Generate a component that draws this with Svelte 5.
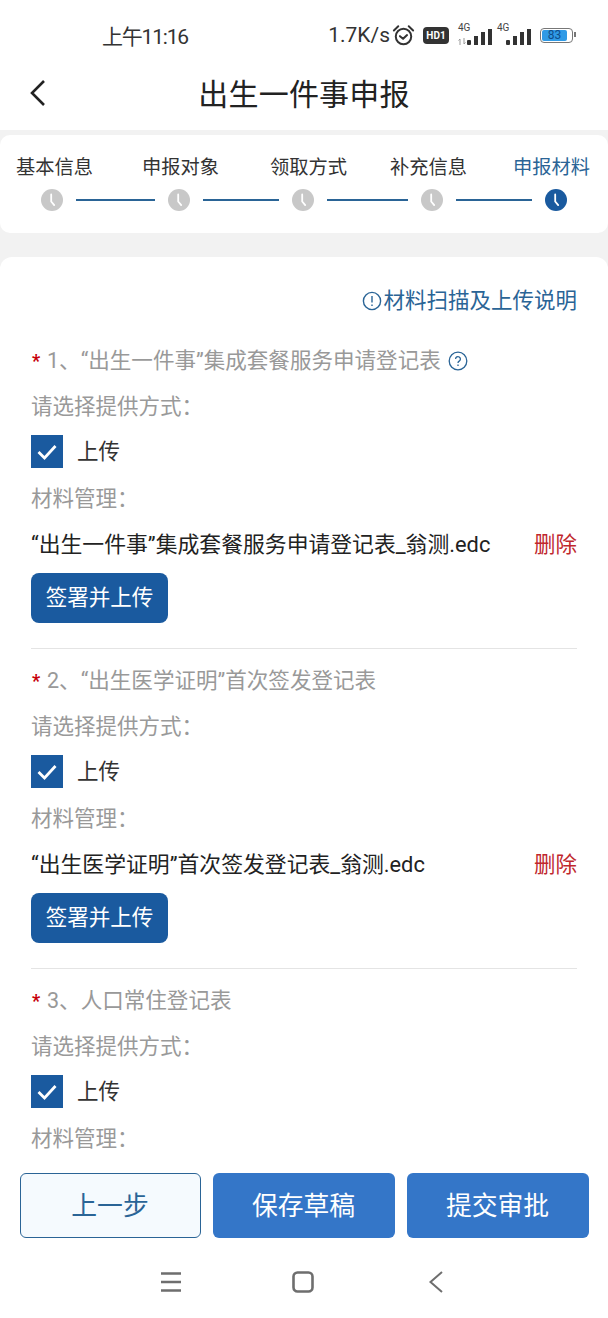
<script>
  const steps = [
    { label: '基本信息', gap: 0, line: 79 },
    { label: '申报对象', gap: 49, line: 76 },
    { label: '领取方式', gap: 51, line: 81 },
    { label: '补充信息', gap: 43, line: 76 },
    { label: '申报材料', gap: 46, active: true }
  ];

  const materials = [
    { no: 1, title: '“出生一件事”集成套餐服务申请登记表', help: true, file: '“出生一件事”集成套餐服务申请登记表_翁测.edc' },
    { no: 2, title: '“出生医学证明”首次签发登记表', file: '“出生医学证明”首次签发登记表_翁测.edc' },
    { no: 3, title: '人口常住登记表' }
  ];
</script>

{#snippet bars()}
  <svg width="26" height="16" viewBox="0 0 26 16" fill="#333" aria-hidden="true">
    <rect x="0" y="11" width="4" height="5" rx="1" /><rect x="7" y="7" width="4" height="9" /><rect x="14" y="3" width="4" height="13" /><rect x="21" y="0" width="4" height="16" />
  </svg>
{/snippet}

<div class="page">
  <div class="top">
    <div class="status">
      <span class="time">上午11:16</span>
      <div class="status-right">
        <span class="speed">1.7K/s</span>
        <svg class="alarm" width="23" height="23" viewBox="0 0 22 22" fill="none" stroke="#333" stroke-width="1.900" aria-hidden="true">
          <circle cx="11" cy="12" r="7.400" />
          <path d="M7.600 11.600l3 2.600 3.800-3.600" stroke-linecap="round" stroke-linejoin="round" />
          <path d="M1.800 6.200L6 2.200M20.200 6.200L16 2.200" stroke-linecap="round" />
        </svg>
        <span class="hd">HD1</span>
        <span class="net">
          <span class="net-label">4G</span>
          <svg class="arrows" width="8" height="7" viewBox="0 0 8 7" fill="none" stroke="#999" stroke-width="1" aria-hidden="true">
            <path d="M2 7V1M0.500 2.500L2 1M6 0v6M7.500 4.500L6 6" />
          </svg>
          {@render bars()}
        </span>
        <span class="net second">
          <span class="net-label">4G</span>
          {@render bars()}
        </span>
        <span class="battery"><span class="level">83</span></span>
      </div>
    </div>
    <div class="nav">
      <svg class="back" width="20" height="30" viewBox="0 0 20 30" fill="none" stroke="#222" stroke-width="2.600" aria-hidden="true">
        <path d="M16 3L4 15l12 12" />
      </svg>
      <span class="nav-title">出生一件事申报</span>
    </div>
  </div>

  <div class="main">
    <div class="steps">
      <div class="step-labels">
        {#each steps as s}
          <span class="step-label" class:active={s.active} style="margin-left: {s.gap}px">{s.label}</span>
        {/each}
      </div>
      <div class="step-track">
        {#each steps as s}
          <svg class="clock" width="22" height="22" viewBox="0 0 22 22" aria-hidden="true">
            <circle cx="11" cy="11" r="11" fill={s.active ? '#1a5a9f' : '#c8c8c8'} />
            <path d="M10.200 5.500v7l3 3.600" fill="none" stroke="#fff" stroke-width="1.800" stroke-linecap="round" />
          </svg>
          {#if s.line}
            <span class="step-line" style="width: {s.line}px"></span>
          {/if}
        {/each}
      </div>
    </div>

    <div class="card">
      <div class="link-row">
        <a class="link" href="#top">
          <svg width="20" height="20" viewBox="0 0 20 20" fill="none" stroke="#2a6496" stroke-width="1.400" aria-hidden="true">
            <circle cx="10" cy="10" r="8.600" />
            <path d="M10 5v6.400M10 13.600v1.400" />
          </svg>材料扫描及上传说明</a>
      </div>

      {#each materials as m, i}
        <section class="item" class:first={i === 0}>
          <div class="item-title">
            <span class="star">*</span>
            <span>{m.no}、{m.title}</span>
            {#if m.help}
              <svg class="help" width="20" height="20" viewBox="0 0 20 20" fill="none" stroke="#2a6496" stroke-width="1.300" aria-hidden="true">
                <circle cx="10" cy="10" r="8.800" />
                <path d="M7.600 8a2.400 2.400 0 1 1 3.600 2.100c-.8.500-1.200 1-1.200 1.900M10 13.600v1.300" />
              </svg>
            {/if}
          </div>
          <div class="label way">请选择提供方式：</div>
          <div class="check-row">
            <span class="check">
              <svg width="32" height="33" viewBox="0 0 32 33" fill="none" stroke="#fff" stroke-width="2.800" aria-hidden="true">
                <path d="M7.500 17l6 6 11-12" />
              </svg>
            </span>
            <span>上传</span>
          </div>
          <div class="label manage">材料管理：</div>
          {#if m.file}
            <div class="file">
              <span class="file-name">{m.file}</span>
              <span class="del">删除</span>
            </div>
            <button class="sign">签署并上传</button>
          {/if}
        </section>
      {/each}
    </div>
  </div>

  <div class="footer">
    <div class="actions">
      <button class="act prev">上一步</button>
      <button class="act">保存草稿</button>
      <button class="act">提交审批</button>
    </div>
    <div class="sysnav">
      <svg width="24" height="22" viewBox="0 0 24 22" fill="none" stroke="#6e6e6e" stroke-width="2.600" aria-hidden="true">
        <path d="M2 2.500h20M2 11h20M2 19.500h20" />
      </svg>
      <svg width="24" height="24" viewBox="0 0 24 24" fill="none" stroke="#6e6e6e" stroke-width="2.600" aria-hidden="true">
        <rect x="2.500" y="2.500" width="19" height="19" rx="4" />
      </svg>
      <svg class="sys-back" width="16" height="24" viewBox="0 0 16 24" fill="none" stroke="#6e6e6e" stroke-width="2" aria-hidden="true">
        <path d="M14 2L2.500 12 14 22" />
      </svg>
    </div>
  </div>
</div>

<style>
  :global(body) {
    background: #fff;
  }

  .page {
    width: 608px;
    height: 1318px;
    display: flex;
    flex-direction: column;
    overflow: hidden;
    background: #f2f2f2;
    font-family: Roboto, "Noto Sans CJK SC", sans-serif;
    color: #333;
  }

  .top { background: #fff; height: 130px; flex-shrink: 0; }

  .status {
    height: 70px;
    display: flex;
    align-items: center;
    justify-content: space-between;
    padding: 0 35px 0 102px;
    color: #333;
  }
  .time { font-size: 21px; letter-spacing: -1.200px; }
  .status-right { display: flex; align-items: center; }
  .speed { font-size: 21px; margin-right: 2px; }
  .hd {
    margin-left: 8px;
    width: 26px; height: 17px;
    border-radius: 4px;
    background: #333; color: #fff;
    font: 700 10px/17px Roboto, sans-serif;
    text-align: center;
  }
  .net { position: relative; width: 37px; height: 20px; margin-left: 7px; display: flex; justify-content: flex-end; align-items: flex-end; }
  .net.second { width: 36px; margin-left: 3px; }
  .net-label { position: absolute; left: 2px; top: -2px; font-size: 10px; line-height: 10px; color: #444; }
  .net.second .net-label { left: 1px; }
  .arrows { position: absolute; left: 2px; bottom: 0; }
  .battery {
    position: relative;
    margin-left: 8px;
    width: 33px; height: 15px;
    box-sizing: border-box;
    border: 1.500px solid #777;
    border-radius: 4px;
    padding: 1px;
  }
  .battery::after {
    content: '';
    position: absolute; right: -4px; top: 3.500px;
    width: 2px; height: 5px;
    background: #777;
  }
  .level {
    display: block;
    width: 86%; height: 100%;
    background: #2f9ae6;
    border-radius: 2px;
    color: #0f4d8a;
    font-size: 12px;
    line-height: 10px;
    text-align: center;
  }

  .nav { position: relative; height: 44px; display: flex; align-items: center; justify-content: center; }
  .back { position: absolute; left: 28px; top: 8px; }
  .nav-title { font-size: 30px; color: #222; letter-spacing: 0.2px; }

  .main { flex: 1; min-height: 0; overflow: hidden; padding-top: 5px; }

  .steps {
    height: 98px;
    box-sizing: border-box;
    background: #fff;
    border-radius: 10px;
    padding-top: 18px;
  }
  .step-labels { display: flex; padding-left: 16px; font-size: 19.250px; line-height: 30px; color: #333; white-space: nowrap; }
  .step-label.active { color: #2a6496; }
  .step-track { display: flex; align-items: center; gap: 13px; padding-left: 41px; margin-top: 6px; }
  .clock { flex-shrink: 0; }
  .step-line { height: 2px; background: #2a6496; }

  .card {
    margin-top: 24px;
    background: #fff;
    border-radius: 12px;
    padding: 29px 31px 40px;
    font-size: 21.500px;
    line-height: 30px;
  }

  .link-row { display: flex; justify-content: flex-end; }
  .link { display: flex; align-items: center; gap: 1px; color: #2a6496; text-decoration: none; }

  .item { padding: 17px 0 25px; border-top: 1px solid #e4e4e4; }
  .item.first { border-top: 0; padding-top: 0; margin-top: 30px; }

  .item-title { display: flex; align-items: center; color: #999; font-size: 21.550px; }
  .star { color: #c7000b; width: 16px; font-size: 18px; font-weight: 700; padding-left: 1px; box-sizing: border-box; }
  .help { margin-left: 7px; }

  .label { color: #999; }
  .way { margin-top: 16px; }
  .manage { margin-top: 16px; }

  .check-row { display: flex; align-items: center; gap: 14px; margin-top: 13px; color: #333; }
  .check { width: 32px; height: 33px; background: #1a5a9f; display: block; }
  .check svg { display: block; }

  .file { display: flex; justify-content: space-between; margin-top: 16px; color: #222; }
  .file-name { font-size: 21.830px; }
  .del { color: #c0272d; }

  .sign {
    display: block;
    margin-top: 13px;
    width: 137px; height: 50px;
    border: 0;
    border-radius: 8px;
    background: #1a5a9f;
    color: #fff;
    font: inherit;
    padding: 0;
  }

  .footer { background: #fff; height: 158px; flex-shrink: 0; box-sizing: border-box; padding-top: 13px; }
  .actions { display: flex; gap: 12px; padding: 0 19px 0 20px; }
  .act {
    flex: 0 0 182px;
    height: 65px;
    border: 0;
    border-radius: 6px;
    background: #3476c8;
    color: #fff;
    font-family: inherit;
    font-size: 25.800px;
    padding: 0 1px 5px 0;
  }
  .act.prev { flex-basis: 181px; background: #f5fafe; color: #2a6496; border: 1px solid #2a6496; }

  .sysnav { display: flex; align-items: center; gap: 108px; margin-top: 32px; padding-left: 159px; }
  .sys-back { margin-left: 5px; }
</style>
